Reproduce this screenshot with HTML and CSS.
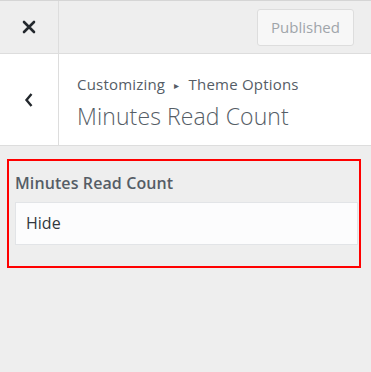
FILE: index.html
```html
<!DOCTYPE html>
<html lang="en">
<head>
    <meta charset="UTF-8">
    <meta name="viewport" content="width=device-width, initial-scale=1.0">
    <title>Customizer</title>
    <link rel="stylesheet" href="styles.css">
</head>
<body>

    <!-- top bar -->
    <div class="topbar">
        <div class="close-btn">
            <svg width="14" height="14" viewBox="0 0 14 14"><path d="M2 2 L12 12 M12 2 L2 12" stroke="#23282d" stroke-width="2.6" stroke-linecap="round"/></svg>
        </div>
        <div class="topbar-right">
            <button class="publish-btn">Published</button>
        </div>
    </div>

    <!-- section header -->
    <div class="section-head">
        <div class="back-btn">
            <svg width="10" height="16" viewBox="0 0 10 16"><path d="M7.5 2 L2.5 8 L7.5 14" fill="none" stroke="#23282d" stroke-width="2.4"/></svg>
        </div>
        <div class="head-text">
            <div class="crumbs">Customizing <span class="arrow">&#9656;</span> Theme Options</div>
            <div class="head-title">Minutes Read Count</div>
        </div>
    </div>

    <!-- control -->
    <div class="controls">
        <div class="control-box">
            <div class="control-label">Minutes Read Count</div>
            <div class="select-box">Hide</div>
        </div>
    </div>

</body>
</html>
```

FILE: styles.css
```css
body {
    margin: 0;
    background-color: #eeeeee;
    font-family: 'Open Sans', 'Noto Sans', sans-serif;
    color: #555d66;
}
.topbar {
    display: flex;
    border-top: 1px solid #d5d5d5;
    border-bottom: 1px solid #dddddd;
    background-color: #eeeeee;
    box-sizing: border-box;
    height: 54px;
}
.close-btn {
    width: 58px;
    border-right: 1px solid #dddddd;
    display: flex;
    justify-content: center;
    align-items: center;
}
.topbar-right {
    flex: 1;
    display: flex;
    justify-content: flex-end;
    align-items: center;
    padding-right: 17px;
}
.publish-btn {
    width: 97px;
    height: 37px;
    font-family: inherit;
    font-size: 15px;
    color: #a0a5aa;
    background-color: #f7f7f7;
    border: 1px solid #dddddd;
    border-radius: 3px;
    padding: 0;
}
.section-head {
    display: flex;
    height: 92px;
    background-color: #ffffff;
    border-bottom: 1px solid #dddddd;
    box-sizing: border-box;
}
.back-btn {
    width: 58px;
    border-right: 1px solid #dddddd;
    display: flex;
    justify-content: center;
    align-items: center;
}
.head-text {
    padding: 19px 0 0 18px;
}
.crumbs {
    font-size: 15px;
    line-height: 22px;
    letter-spacing: 0.2px;
}
.arrow {
    font-size: 10px;
    margin: 0 5px;
    vertical-align: 1px;
}
.head-title {
    font-size: 23px;
    font-weight: 300;
    line-height: 32px;
    margin-top: 4px;
    letter-spacing: 0.1px;
}
.controls {
    padding: 13px 10px 0 7px;
}
.control-box {
    width: 354px;
    height: 109px;
    box-sizing: border-box;
    border: 2px solid #ff0000;
    padding: 11px 1px 0 6px;
}
.control-label {
    font-size: 16px;
    font-weight: 600;
    line-height: 22px;
    letter-spacing: 0.1px;
}
.select-box {
    margin-top: 8px;
    height: 43px;
    box-sizing: border-box;
    background-color: #fcfcfd;
    border: 1px solid #e2e4e7;
    padding: 0 0 0 10px;
    font-size: 16px;
    line-height: 41px;
    color: #32373c;
}
```
